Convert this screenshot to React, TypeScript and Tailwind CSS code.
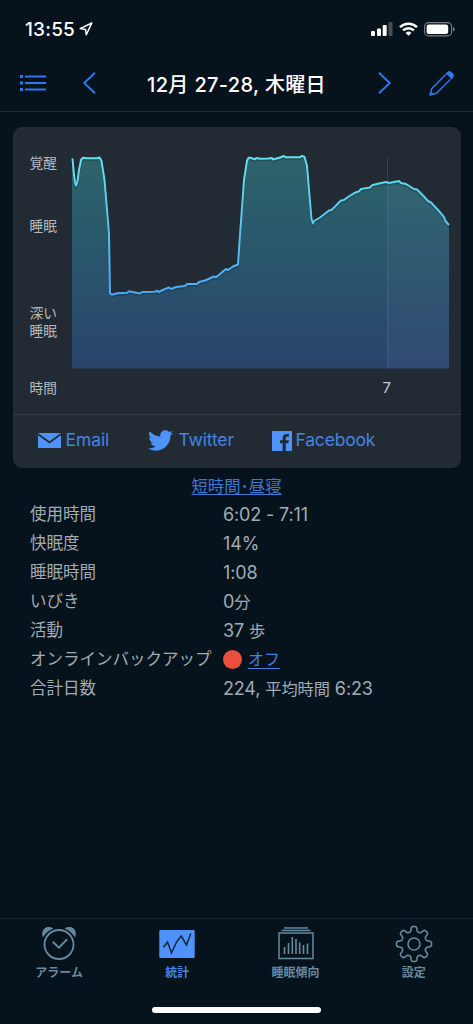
import type { ReactNode } from 'react';
import { FaTwitter } from 'react-icons/fa';

type Point = [number, number];

type StatRow = {
  label: string;
  value: ReactNode;
};

// sleep depth samples, in chart pixels (377 x 214)
const samples: Point[] = [
  [0.5, 3.5], [2, 20], [3, 27], [4, 30.5], [5.5, 26], [7, 15], [9, 5], [11, 2.7], [15, 3.3], [25, 3.3], [27.5, 2.5], [29.5, 6],
  [32.5, 25], [35, 55], [37, 79], [38, 138.5], [40, 139.7], [45, 138.3], [55, 137.7], [57, 136.3], [63, 137.5],
  [68, 138.5], [70, 137], [83, 136.7], [85, 135.7], [86.5, 137], [93, 134], [97, 132.5], [99, 134], [104, 132],
  [113, 131], [115, 129], [125, 129], [127, 127], [133, 125.5], [142, 121.5], [144, 122.3], [154, 114], [156, 115],
  [161, 111.5], [166, 109.5], [168, 80], [172, 25], [175, 6], [176.5, 2.8], [178, 2.8], [183, 4.3], [184.5, 3], [188, 3.7],
  [196, 3.5], [200, 3], [201, 4.5], [208, 2.5], [212, 1], [213.5, 2.3], [228, 2.3], [230, 0.8], [232.5, 2],
  [235, 11], [237, 35], [239.5, 64], [241, 68.5], [242, 66], [248, 62.5], [257, 55.5], [259.5, 55], [269, 45.5],
  [272, 45], [276, 42], [283, 37.7], [287, 36.3], [289, 34], [298, 32.5], [300, 30.3], [307, 28.5], [314, 27], [317, 28], [327, 26],
  [329, 28], [334, 29], [342, 34], [345, 34.5], [351, 40.5], [356, 46], [359, 47.5], [366, 55], [372, 62], [373.5, 66], [377, 70],
];

const linePath = 'M' + samples.map(([x, y]) => `${x} ${y}`).join('L');
const areaPath = `${linePath}L377 213.500H0V3.5Z`;

const gearPath =
  'M' +
  Array.from({ length: 240 }, (_, i) => {
    const a = (i / 240) * Math.PI * 2;
    const r = 15.1 + 2.5 * Math.tanh(2.2 * Math.cos(8 * a));
    return `${(19 + r * Math.sin(a)).toFixed(2)} ${(19 - r * Math.cos(a)).toFixed(2)}`;
  }).join('L') +
  'Z';

const rows: StatRow[] = [
  { label: '使用時間', value: '6:02 - 7:11' },
  { label: '快眠度', value: '14%' },
  { label: '睡眠時間', value: '1:08' },
  { label: 'いびき', value: <>0<Ja>分</Ja></> },
  { label: '活動', value: <>37 <Ja>歩</Ja></> },
  {
    label: 'オンラインバックアップ',
    value: (
      <span className="flex items-center">
        <span className="mr-[6px] h-[19px] w-[19px] rounded-full bg-[#eb4f3c]" />
        <a className="text-[16px] tracking-normal text-[#4480e0] underline decoration-1 underline-offset-[3px]">オフ</a>
      </span>
    ),
  },
  { label: '合計日数', value: <>224, <Ja>平均時間</Ja> 6:23</> },
];

function Ja({ children }: { children: ReactNode }) {
  return <span className="text-[16.2px] tracking-normal">{children}</span>;
}

function StatusBar() {
  return (
    <div className="flex h-[55px] items-center justify-between pt-[3px] pr-[17px] pl-[25px]">
      <div className="flex items-center gap-[4px]">
        <span className="pt-px text-[19px] leading-6 font-medium tracking-[0.2px]">13:55</span>
        <svg width="14" height="14" viewBox="0 0 14 14" fill="none" stroke="#fff" strokeWidth="1.5" strokeLinejoin="round">
          <path d="M12.8 1 1.2 6.6l5.3.8.8 5.4Z" />
        </svg>
      </div>
      <div className="flex items-center">
        <svg width="22" height="14" viewBox="0 0 22 14" fill="#fff">
          <rect x="0" y="9" width="4" height="5" rx="1" />
          <rect x="6" y="6.5" width="4" height="7.5" rx="1" />
          <rect x="11.7" y="3" width="4" height="11" rx="1" />
          <rect x="17.5" y="0" width="4" height="14" rx="1" opacity="0.25" />
        </svg>
        <svg className="ml-[6px]" width="19" height="14" viewBox="0 0 19 14" fill="none" stroke="#fff" strokeWidth="2.5">
          <path d="M1 5.1a12.2 12.2 0 0 1 17 0" />
          <path d="M4.1 8.4a7.7 7.7 0 0 1 10.8 0" />
          <path d="M9.5 13.8 6.6 10.9a4.2 4.2 0 0 1 5.8 0Z" fill="#fff" stroke="none" />
        </svg>
        <svg className="ml-[6px]" width="32" height="15" viewBox="0 0 32 15">
          <rect x="0.6" y="0.6" width="27" height="13.3" rx="4" fill="none" stroke="#7b8287" strokeWidth="1.1" />
          <rect x="2.6" y="2.5" width="21.6" height="9.5" rx="2.2" fill="#fff" />
          <path d="M29 5v4.6q1.7-.8 1.7-2.3T29 5Z" fill="#7b8287" />
        </svg>
      </div>
    </div>
  );
}

function NavBar() {
  return (
    <div className="flex h-[57px] items-center border-b border-[#172831] pl-5 text-[#2f76ef]">
      <svg width="26" height="16" viewBox="0 0 26 16" fill="currentColor">
        <path d="M0 0h3v3H0zM5 .5h21V2.5H5zM0 6.5h3v3H0zM5 7h21v2H5zM0 13h3v3H0zM5 13.5h21v2H5z" />
      </svg>
      <svg className="ml-[36px]" width="15" height="22" viewBox="0 0 15 22" fill="none" stroke="currentColor" strokeWidth="2">
        <path d="M13 .7 2.3 11 13 21.3" />
      </svg>
      <h1 className="ml-[50px] w-[179px] pt-[3px] text-center text-[20px] leading-7 font-medium tracking-[0.35px] whitespace-nowrap text-white">
        12月 27-28, 木曜日
      </h1>
      <svg className="ml-[51px]" width="15" height="22" viewBox="0 0 15 22" fill="none" stroke="currentColor" strokeWidth="2">
        <path d="M2 .7 12.7 11 2 21.3" />
      </svg>
      <svg className="ml-[37px]" width="25" height="25" viewBox="0 0 25 25" fill="none" stroke="currentColor" strokeWidth="1.5" strokeLinejoin="round">
        <path d="M1 24 2.8 17.5 18 2.3 22.7 7 7.5 22.2Z" />
        <path d="m1.5 23.5 2-1.5" strokeWidth="2" />
        <path d="m18.2 2.2 1-.9q1.300-1 2.700.3l1.500 1.500q1.300 1.400.3 2.700l-.9 1Z" fill="currentColor" />
        <path d="m16.4 3.2 5.4 5.4" stroke="#07131c" strokeWidth="1" />
      </svg>
    </div>
  );
}

function SleepChart() {
  return (
    <svg width="378" height="216" viewBox="0 0 378 216" className="overflow-visible">
      <defs>
        <linearGradient id="area" x1="0" y1="0" x2="0" y2="214" gradientUnits="userSpaceOnUse">
          <stop offset="0" stopColor="#2e646b" />
          <stop offset="0.5" stopColor="#29556b" />
          <stop offset="1" stopColor="#29446c" />
        </linearGradient>
        <linearGradient id="line" x1="0" y1="0" x2="0" y2="140" gradientUnits="userSpaceOnUse">
          <stop offset="0" stopColor="#62e2ec" />
          <stop offset="1" stopColor="#4ca8f3" />
        </linearGradient>
        <clipPath id="lastHour">
          <rect x="315.5" y="0" width="62" height="214" />
        </clipPath>
      </defs>
      <path d={areaPath} fill="url(#area)" />
      <path d={areaPath} fill="#8f9fc8" opacity="0.07" clipPath="url(#lastHour)" />
      <path d="M315.5 2.5V213.5" stroke="#93a5b5" strokeOpacity="0.2" />
      <path d={linePath} transform="translate(0 1.5)" fill="none" stroke="#0b1b25" strokeOpacity="0.25" strokeWidth="2.5" />
      <path d={linePath} fill="none" stroke="url(#line)" strokeWidth="2" strokeLinejoin="round" />
    </svg>
  );
}

function ShareBar() {
  return (
    <div className="flex h-[53px] items-center border-t border-[#343e46] pb-px pl-[25px] text-[17.5px] text-[#4583e4]">
      <a className="flex w-[110px] items-center gap-[5px]">
        <svg width="23" height="15" viewBox="0 0 23 15" fill="#4e92fa">
          <path d="M0 0h23L11.5 8.2Z" />
          <path d="M0 2.2 11.5 10.4 23 2.2V15H0Z" />
        </svg>
        <span className="tracking-[-0.1px]">Email</span>
      </a>
      <a className="flex w-[124px] items-center gap-[6px]">
        <FaTwitter className="h-[25px] w-[25px] text-[#4e92fa]" />
        <span className="tracking-[-0.15px]">Twitter</span>
      </a>
      <a className="flex items-center gap-[4px]">
        <svg width="20" height="20" viewBox="0 0 24 24" fill="#4e92fa">
          <path d="M22.676 0H1.324C.593 0 0 .593 0 1.324v21.352C0 23.408.593 24 1.324 24h11.494v-9.294H9.689v-3.621h3.129V8.410c0-3.099 1.894-4.785 4.659-4.785 1.325 0 2.464.097 2.796.141v3.240h-1.921c-1.500 0-1.792.721-1.792 1.771v2.311h3.584l-.465 3.630H16.560V24h6.115c.733 0 1.325-.592 1.325-1.324V1.324C24 .593 23.408 0 22.676 0" />
        </svg>
        <span className="tracking-[-0.2px]">Facebook</span>
      </a>
    </div>
  );
}

function AlarmIcon() {
  return (
    <svg width="36" height="36" viewBox="0 0 36 36" fill="none" stroke="currentColor" strokeWidth="1.8">
      <circle cx="18" cy="18.5" r="14.5" />
      <path d="m11.7 15.7 6.2 5.9 8.3-8.3" strokeWidth="2" />
      <path d="M1.800 11.500C0 6 2.500 1.600 7 1.100c2.300-.2 4.200.4 5.300 1.600C7.500 4.500 4.200 7.500 1.800 11.500ZM34.200 11.500C36 6 33.500 1.600 29 1.100c-2.300-.2-4.200.4-5.300 1.600 4.800 1.800 8.100 4.800 10.500 8.800Z" fill="currentColor" stroke="none" />
    </svg>
  );
}

function StatsIcon() {
  return (
    <svg width="36" height="36" viewBox="0 0 36 36">
      <rect x="0.3" y="4" width="35.4" height="28" rx="1" fill="#4e92fa" />
      <path d="m4.500 21.200 4-5.200 4 10.800 5.500-11.500 4.300-5.300 5.200 9L31.800 7.500" fill="none" stroke="#10243a" strokeWidth="1.5" />
    </svg>
  );
}

function TrendsIcon() {
  return (
    <svg width="36" height="36" viewBox="0 0 36 36" fill="none" stroke="currentColor">
      <path d="M6 2h24M3.5 4.5h29" strokeWidth="1.5" />
      <rect x="1" y="7" width="34" height="25.5" strokeWidth="1.5" />
      <path d="M6.5 28v-7M10.5 28v-11M14.3 28v-17M18 28v-15M21.7 28v-11.5M25.5 28v-9M29.5 28v-10.5" strokeWidth="1.6" />
    </svg>
  );
}

function GearIcon() {
  return (
    <svg width="38" height="38" viewBox="0 0 38 38" fill="none" stroke="currentColor" strokeWidth="1.6">
      <path d={gearPath} />
      <circle cx="19" cy="19" r="6" />
    </svg>
  );
}

const tabs = [
  { label: 'アラーム', icon: <AlarmIcon />, active: false },
  { label: '統計', icon: <StatsIcon />, active: true },
  { label: '睡眠傾向', icon: <TrendsIcon />, active: false },
  { label: '設定', icon: <GearIcon />, active: false },
];

export default function App() {
  return (
    <div className="flex h-[1024px] w-[473px] flex-col overflow-hidden bg-[#07131c] font-['Inter','Noto_Sans_CJK_JP',sans-serif] text-white">
      <StatusBar />
      <NavBar />

      <section className="mx-[12.5px] mt-[15px] h-[341px] rounded-[9px] bg-[#222b33]">
        <div className="flex h-[287px] pt-[28px] pl-[17px] text-[13.7px] text-[#b6bbbf]">
          <div className="-mt-px w-[42.5px] leading-[18px]">
            <p className="h-[18px]">覚醒</p>
            <p className="mt-[45px] h-[18px]">睡眠</p>
            <p className="mt-[69px] h-[36px]">深い<br />睡眠</p>
            <p className="mt-[39px] h-[18px]">時間</p>
          </div>
          <div>
            <SleepChart />
            <p className="ml-[310.5px] text-[15px] leading-[34px] text-[#c4c8cb]">7</p>
          </div>
        </div>
        <ShareBar />
      </section>

      <div className="mt-[6px] text-center">
        <a className="text-[16.4px] leading-6 text-[#3f78d4] underline decoration-1 underline-offset-[2px]">短時間･昼寝</a>
      </div>

      <dl className="mt-[2px] pl-[30px] text-[#a2abb3]">
        {rows.map((row) => (
          <div key={row.label} className="flex h-[29px] items-center whitespace-nowrap">
            <dt className="w-[193px] text-[16.5px]">{row.label}</dt>
            <dd className="text-[18px] leading-[29px] tracking-[-0.15px]">{row.value}</dd>
          </div>
        ))}
      </dl>

      <nav className="mt-auto h-[106px] border-t border-[#172831]">
        <div className="grid grid-cols-4 text-[12px] font-semibold">
          {tabs.map((tab) => (
            <div key={tab.label} className={`flex flex-col items-center pt-[6px] ${tab.active ? 'text-[#4583e4]' : 'text-[#66899f]'}`}>
              <div className="flex h-[38px] items-center">{tab.icon}</div>
              <span className="mt-px leading-[18px]">{tab.label}</span>
            </div>
          ))}
        </div>
        <div className="mx-auto mt-[25px] h-[6px] w-[169px] rounded-full bg-white" />
      </nav>
    </div>
  );
}
